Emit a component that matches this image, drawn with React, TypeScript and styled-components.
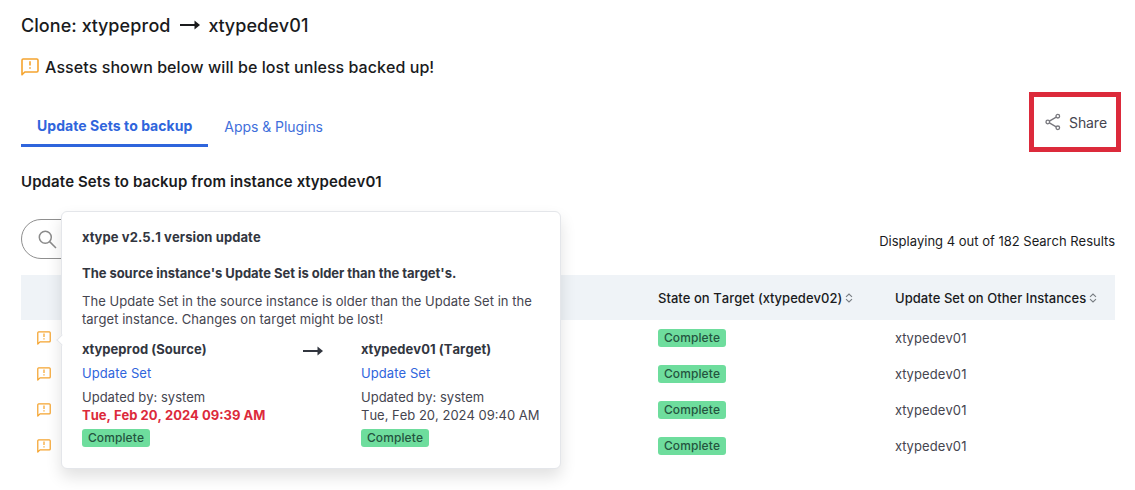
import React from "react";
import styled, { createGlobalStyle } from "styled-components";

const rows = [
  { state: "Complete", instance: "xtypedev01" },
  { state: "Complete", instance: "xtypedev01" },
  { state: "Complete", instance: "xtypedev01" },
  { state: "Complete", instance: "xtypedev01" },
];

const ArrowIcon = ({ width = 20 }: { width?: number }) => (
  <svg width={width} height="12" viewBox="0 0 20 12" fill="none">
    <path d="M0 6H16" stroke="currentColor" strokeWidth="2" />
    <path d="M14.5 1.6L20 6L14.5 10.4Z" fill="currentColor" />
  </svg>
);

const WarningIcon = ({ size = 14 }: { size?: number }) => (
  <svg width={size} height={size} viewBox="0 0 18 18" fill="none">
    <path
      d="M1 16.8V2.2C1 1.5 1.5 1 2.2 1H15.8C16.5 1 17 1.5 17 2.2V12.8C17 13.5 16.5 14 15.8 14H3.8L1 16.8Z"
      stroke="#f5a42f"
      strokeWidth="1.6"
      strokeLinejoin="round"
    />
    <path d="M9 3.2V7.6M9 9.2V10.8" stroke="#f5a42f" strokeWidth="1.6" />
  </svg>
);

const ShareIcon = () => (
  <svg width="16" height="18" viewBox="0 0 16 18" fill="none" stroke="#77777d" strokeWidth="1.3">
    <circle cx="2.8" cy="9" r="1.8" />
    <circle cx="12.8" cy="3.2" r="1.8" />
    <circle cx="12.8" cy="14.8" r="1.8" />
    <path d="M4.4 8.1L11.2 4.1M4.4 9.9L11.2 13.9" />
  </svg>
);

const SearchIcon = () => (
  <svg width="19" height="19" viewBox="0 0 19 19" fill="none" stroke="#8b8b8b" strokeWidth="1.5">
    <circle cx="7.3" cy="7.3" r="6" />
    <path d="M11.6 11.6L18 18" />
  </svg>
);

const SortIcon = () => (
  <svg width="8" height="10" viewBox="0 0 8 10" fill="none" stroke="#777c82" strokeWidth="1.1">
    <path d="M1 3.8L4 1L7 3.8M1 6.2L4 9L7 6.2" />
  </svg>
);

const App = () => {
  return (
    <>
      <GlobalStyle />
      <Page>
        <Title>
          Clone: xtypeprod <ArrowIcon /> xtypedev01
        </Title>
        <Alert>
          <WarningIcon size={18} />
          Assets shown below will be lost unless backed up!
        </Alert>
        <TabBar>
          <Tabs>
            <Tab $active>Update Sets to backup</Tab>
            <Tab>Apps &amp; Plugins</Tab>
          </Tabs>
          <ShareButton>
            <ShareIcon />
            Share
          </ShareButton>
        </TabBar>
        <Heading>Update Sets to backup from instance xtypedev01</Heading>
        <Toolbar>
          <SearchBox>
            <SearchIcon />
          </SearchBox>
          <ResultCount>Displaying 4 out of 182 Search Results</ResultCount>
        </Toolbar>
        <HeaderRow>
          <span />
          <HeaderCell>
            State on Target (xtypedev02) <SortIcon />
          </HeaderCell>
          <HeaderCell>
            Update Set on Other Instances <SortIcon />
          </HeaderCell>
        </HeaderRow>
        {rows.map((row, i) => (
          <Row key={i}>
            <IconCell>
              <WarningIcon />
            </IconCell>
            <div>
              <Badge>{row.state}</Badge>
            </div>
            <InstanceName>{row.instance}</InstanceName>
          </Row>
        ))}
        <Popover>
          <PopoverTitle>xtype v2.5.1 version update</PopoverTitle>
          <PopoverSubtitle>
            The source instance's Update Set is older than the target's.
          </PopoverSubtitle>
          <PopoverText>
            The Update Set in the source instance is older than the Update Set in the
            <br />
            target instance. Changes on target might be lost!
          </PopoverText>
          <Comparison>
            <Side>
              <SideName>xtypeprod (Source)</SideName>
              <SideLink>Update Set</SideLink>
              <span>Updated by: system</span>
              <UpdatedAt $outdated>Tue, Feb 20, 2024 09:39 AM</UpdatedAt>
              <Badge>Complete</Badge>
            </Side>
            <ArrowCell>
              <ArrowIcon />
            </ArrowCell>
            <Side>
              <SideName>xtypedev01 (Target)</SideName>
              <SideLink>Update Set</SideLink>
              <span>Updated by: system</span>
              <UpdatedAt>Tue, Feb 20, 2024 09:40 AM</UpdatedAt>
              <Badge>Complete</Badge>
            </Side>
          </Comparison>
        </Popover>
      </Page>
    </>
  );
};

const GlobalStyle = createGlobalStyle`
  * {
    box-sizing: border-box;
  }

  body {
    margin: 0;
    background: #fff;
    font-family: Inter, "Liberation Sans", sans-serif;
    font-kerning: none;
  }
`;

const Page = styled.div`
  position: relative;
  height: 490px;
  padding: 13px 20px 0 21px;
  overflow: hidden;
  color: #1a1b1d;
  font-size: 13px;
  white-space: nowrap;

  svg {
    flex-shrink: 0;
  }
`;

const Title = styled.h1`
  display: flex;
  align-items: center;
  gap: 9px;
  height: 24px;
  margin: 0;
  font-size: 18px;
  font-weight: 500;
  letter-spacing: 0.06px;

  svg {
    margin-bottom: 1px;
  }
`;

const Alert = styled.div`
  display: flex;
  align-items: center;
  gap: 6px;
  height: 24px;
  margin-top: 18px;
  font-size: 16px;
  font-weight: 500;
  letter-spacing: 0.06px;
`;

const TabBar = styled.div`
  display: flex;
  justify-content: space-between;
  height: 60px;
  margin: 13px -6px 0 0;
`;

const Tabs = styled.div`
  display: flex;
  margin: 14px 0 5px;
`;

const Tab = styled.div<{ $active?: boolean }>`
  padding: ${({ $active }) => ($active ? "10px 16px 0" : "11px 16px 0")};
  border-bottom: 3px solid ${({ $active }) => ($active ? "#2f65dc" : "transparent")};
  color: ${({ $active }) => ($active ? "#2f65dc" : "#3f6fdb")};
  font-size: 14px;
  font-weight: ${({ $active }) => ($active ? 700 : 400)};
  line-height: 20px;
  letter-spacing: ${({ $active }) => ($active ? "0.04px" : "-0.05px")};
`;

const ShareButton = styled.div`
  display: flex;
  align-items: center;
  gap: 8px;
  width: 92px;
  padding-left: 11px;
  border: 5px solid #dc2a3b;
  color: #45454f;
  font-size: 14px;
  letter-spacing: -0.1px;
`;

const Heading = styled.h2`
  height: 20px;
  margin: 20px 0 0;
  font-size: 15px;
  font-weight: 600;
  line-height: 20px;
  letter-spacing: 0.1px;
`;

const Toolbar = styled.div`
  display: flex;
  align-items: center;
  justify-content: space-between;
  height: 40px;
  margin-top: 27px;
`;

const SearchBox = styled.div`
  display: flex;
  align-items: center;
  width: 300px;
  height: 40px;
  padding-left: 16px;
  border: 1px solid #8f8f8f;
  border-radius: 20px;
`;

const ResultCount = styled.div`
  padding-top: 4px;
  font-size: 13px;
`;

const HeaderRow = styled.div`
  display: grid;
  grid-template-columns: 637px 237px 1fr;
  align-items: center;
  height: 45px;
  margin-top: 16px;
  background: #eff3f7;
`;

const HeaderCell = styled.div`
  display: flex;
  align-items: center;
  gap: 3px;
  font-weight: 500;
  letter-spacing: 0.04px;
`;

const Row = styled.div`
  display: grid;
  grid-template-columns: 637px 237px 1fr;
  align-items: center;
  height: 36px;
`;

const IconCell = styled.div`
  display: flex;
  padding: 0 0 1px 15.5px;
`;

const Badge = styled.span`
  display: flex;
  align-items: center;
  justify-content: center;
  width: 68px;
  height: 18px;
  padding-bottom: 1px;
  border-radius: 3px;
  background: #6edd9d;
  color: #24543f;
  font-size: 12px;
  font-weight: 500;
  letter-spacing: 0.1px;
`;

const InstanceName = styled.div`
  color: #45454f;
  letter-spacing: 0.1px;
`;

const Popover = styled.div`
  position: absolute;
  top: 211px;
  left: 61px;
  width: 500px;
  height: 258px;
  padding: 16px 20px 0;
  border: 1px solid #e4e6ea;
  border-radius: 6px;
  background: #fff;
  box-shadow: 0 8px 16px rgba(0, 0, 0, 0.12);
  color: #45454f;
  font-size: 13px;
  line-height: 18px;

  &::before {
    content: "";
    position: absolute;
    top: 124px;
    left: -4px;
    width: 7px;
    height: 7px;
    border: solid #e4e6ea;
    border-width: 0 0 1px 1px;
    background: #fff;
    transform: rotate(45deg);
  }
`;

const PopoverTitle = styled.div`
  color: #32363f;
  font-weight: 700;
  letter-spacing: 0.1px;
`;

const PopoverSubtitle = styled.div`
  margin-top: 18px;
  color: #32363f;
  font-weight: 700;
  letter-spacing: -0.04px;
`;

const PopoverText = styled.div`
  margin-top: 10px;
  letter-spacing: 0.035px;
`;

const Comparison = styled.div`
  display: grid;
  grid-template-columns: 220px 59px 1fr;
  margin-top: 12px;
`;

const Side = styled.div`
  display: flex;
  flex-direction: column;
`;

const SideName = styled.div`
  color: #32363f;
  font-weight: 700;
  letter-spacing: 0.05px;
`;

const SideLink = styled.a`
  margin: 6px 0;
  color: #2f65dc;
  letter-spacing: 0.08px;
`;

const UpdatedAt = styled.span<{ $outdated?: boolean }>`
  margin-bottom: 5px;
  color: ${({ $outdated }) => ($outdated ? "#dc2a3b" : "inherit")};
  font-weight: ${({ $outdated }) => ($outdated ? 700 : 400)};
`;

const ArrowCell = styled.div`
  padding: 3px 0 0 1px;
  color: #32363f;
`;

export default App;
